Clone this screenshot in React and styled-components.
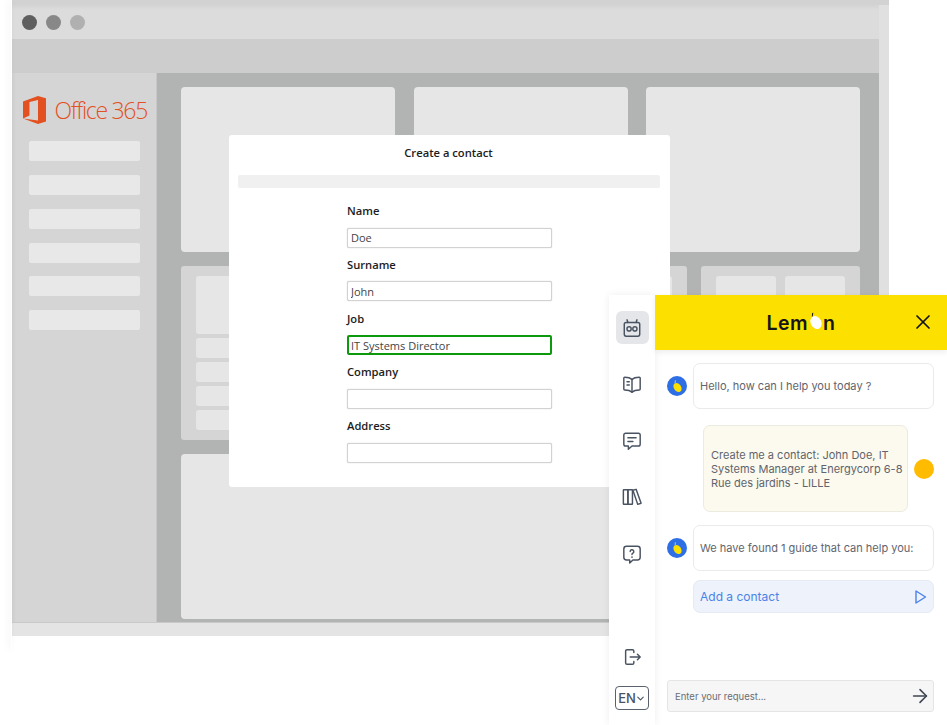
import React from "react";
import styled, { createGlobalStyle } from "styled-components";
import { ArrowRight, ChevronDown, X } from "lucide-react";

const GlobalStyle = createGlobalStyle`
  html, body {
    margin: 0;
    padding: 0;
    background: #fff;
    font-family: "Open Sans", "Liberation Sans", sans-serif;
  }
`;

const Page = styled.div`
  position: relative;
  width: 947px;
  height: 725px;
  overflow: hidden;
  background: #fff;
`;

const Browser = styled.div`
  position: relative;
  margin-left: 12px;
  width: 877px;

  &::before {
    content: "";
    position: absolute;
    left: -1px;
    top: 0;
    bottom: -14px;
    width: 1px;
    box-shadow: -2px 0 6px rgba(0, 0, 0, 0.14);
  }
`;

const TopEdge = styled.div`
  height: 5px;
  background: #d2d2d2;
`;

const Frame = styled.div`
  border-right: 10px solid #e0e0e0;
`;

const TitleBar = styled.div`
  height: 34px;
  display: flex;
  align-items: center;
  gap: 9px;
  padding-left: 10px;
  background: #dcdcdc;
  box-shadow: inset 0 5px 5px -4px rgba(0, 0, 0, 0.06);
`;

const Dot = styled.span`
  width: 15px;
  height: 15px;
  border-radius: 50%;
  background: ${(p) => p.$color};
`;

const ToolBar = styled.div`
  height: 34px;
  background: #cdcdcd;
`;

const Body = styled.div`
  display: flex;
  height: 549px;
`;

const Side = styled.aside`
  width: 145px;
  flex: none;
  padding: 23px 16px 0 17px;
  box-sizing: border-box;
  background: #d5d5d5;
  border-right: 1px solid #c8c8c8;
  box-shadow: inset 5px 0 5px -5px rgba(0, 0, 0, 0.05);
`;

const Logo = styled.div`
  display: flex;
  align-items: center;
  gap: 8.5px;
  height: 28px;
  margin: 0 -7px 17px -6px;
  color: #e2511f;
  font-size: 23px;
  font-weight: 300;
  letter-spacing: -1.3px;
  white-space: nowrap;
`;

const SideList = styled.div`
  display: flex;
  flex-direction: column;
  gap: 13.85px;
`;

const SideItem = styled.div`
  height: 20px;
  border-radius: 2px;
  background: #e8e8e8;
`;

const Main = styled.main`
  flex: 1;
  display: flex;
  flex-direction: column;
  gap: 14px;
  padding: 14px 19px 3px 24px;
  background: #b2b4b3;
`;

const TopRow = styled.div`
  display: grid;
  grid-template-columns: 214px 214px 214px;
  justify-content: space-between;
  height: 165px;
`;

const Card = styled.div`
  border-radius: 4px;
  background: #e6e6e6;
`;

const MidRow = styled.div`
  display: flex;
  gap: 14px;
  height: 174px;
`;

const Panel = styled.div`
  display: flex;
  flex-direction: column;
  gap: 4px;
  box-sizing: border-box;
  width: ${(p) => p.$width}px;
  padding: 10px 15px;
  border-radius: 3px;
  background: #d5d5d5;
`;

const PanelTiles = styled.div`
  display: flex;
  gap: 9px;
`;

const Tile = styled.div`
  flex: ${(p) => (p.$fixed ? "0 0 60px" : "none")};
  height: ${(p) => p.$height}px;
  border-radius: 3px;
  background: #e6e6e6;
`;

const BottomCard = styled(Card)`
  flex: 1;
`;

const Footer = styled.div`
  height: 14px;
  background: #e4e4e4;
  border-top: 1px solid #c9c9c9;
  box-sizing: border-box;
`;

const Modal = styled.section`
  position: absolute;
  left: 229px;
  top: 135px;
  width: 441px;
  height: 352px;
  box-sizing: border-box;
  padding-top: 10px;
  border-radius: 3px;
  background: #fff;
`;

const ModalTitle = styled.h2`
  margin: 0 0 15px;
  height: 15px;
  text-align: center;
  color: #1c1c1c;
  font-size: 11.2px;
  line-height: 15px;
  font-weight: 550;
  transform: translateX(-1px);
`;

const Strip = styled.div`
  height: 13px;
  margin: 0 10px 15px 9px;
  border-radius: 2px;
  background: #f0f0f0;
`;

const Form = styled.div`
  display: flex;
  flex-direction: column;
  gap: 9.25px;
  width: 205px;
  margin-left: 118px;
`;

const FieldGroup = styled.label`
  display: flex;
  flex-direction: column;
  gap: 9.5px;
  height: 44.5px;
  color: #1c1c1c;
  font-size: 11.2px;
  line-height: 15px;
  font-weight: 550;
`;

const Field = styled.input`
  box-sizing: border-box;
  width: 205px;
  height: 20px;
  padding: 0 ${(p) => (p.$active ? "2px" : "3px")};
  border: ${(p) => (p.$active ? "2px solid #0c9a0c" : "1px solid #d2d2d2")};
  border-radius: 2px;
  outline: none;
  background: #fff;
  box-shadow: ${(p) => (p.$active ? "none" : "0 0 1px #b4b4b4")};
  color: #444;
  font-family: "Open Sans", "Liberation Sans", sans-serif;
  font-size: 11px;
`;

const Widget = styled.section`
  position: absolute;
  left: 609px;
  top: 295px;
  width: 338px;
  height: 430px;
  display: flex;
  background: #fff;
`;

const Rail = styled.nav`
  width: 46px;
  height: 100%;
  box-sizing: border-box;
  padding: 16px 0 15px;
  display: flex;
  flex-direction: column;
  align-items: center;
  background: #fff;
  box-shadow: 0 0 8px rgba(0, 0, 0, 0.07);
`;

const RailButton = styled.div`
  width: 33px;
  height: 33px;
  display: flex;
  align-items: center;
  justify-content: center;
  flex: none;
  margin-bottom: ${(p) => p.$gap ?? 23.5}px;
  border-radius: 6px;
  background: ${(p) => (p.$active ? "#e4e6ea" : "transparent")};
  color: #4a5361;
`;

const Spacer = styled.div`
  flex: 1;
`;

const Lang = styled.div`
  box-sizing: border-box;
  width: 34px;
  height: 24px;
  display: flex;
  align-items: center;
  justify-content: center;
  border: 1.5px solid #5a626e;
  border-radius: 4px;
  color: #4a5361;
  font-family: Inter, "Liberation Sans", sans-serif;
  font-size: 13px;
  font-weight: 500;

  svg {
    margin-left: -1px;
    flex: none;
  }
`;

const Chat = styled.div`
  flex: 1;
  display: flex;
  flex-direction: column;
  font-family: Inter, "Liberation Sans", sans-serif;
`;

const ChatHeader = styled.header`
  position: relative;
  height: 55px;
  display: flex;
  align-items: center;
  justify-content: center;
  flex: none;
  background: #fbe000;
  box-shadow: 0 2px 6px rgba(0, 0, 0, 0.08);
`;

const Brand = styled.div`
  display: flex;
  align-items: center;
  color: #141414;
  font-size: 19.5px;
  font-weight: 600;
  letter-spacing: 0.45px;
`;

const BrandLemon = styled.svg`
  margin: -3px 1px 0 1px;
`;

const CloseButton = styled.div`
  position: absolute;
  right: 12px;
  top: 15px;
  display: flex;
  color: #141414;
`;

const Messages = styled.div`
  flex: 1;
  display: flex;
  flex-direction: column;
  padding: 13px 13px 0 12px;
`;

const BotRow = styled.div`
  display: flex;
  align-items: center;
  gap: 6px;
  margin-bottom: ${(p) => p.$gap}px;
`;

const Avatar = styled.div`
  width: 20px;
  height: 20px;
  flex: none;
  display: flex;
  border-radius: 50%;
  background: #2f6fe6;
`;

const Bubble = styled.div`
  flex: 1;
  box-sizing: border-box;
  height: 46px;
  display: flex;
  align-items: center;
  padding: 0 6px;
  border: 1px solid #e9eaec;
  border-radius: 7px;
  background: #fff;
  color: #5f646d;
  font-size: 11px;
`;

const UserRow = styled.div`
  display: flex;
  align-items: center;
  gap: 6px;
  margin: 0 0 13px 36px;
`;

const UserBubble = styled.div`
  width: 205px;
  height: 87px;
  box-sizing: border-box;
  display: flex;
  align-items: center;
  padding: 8px 3px 8px 7px;
  border: 1px solid #ecebdf;
  border-radius: 7px;
  background: #fcfaee;
  color: #5f646d;
  font-size: 11px;
  line-height: 14px;
`;

const UserDot = styled.div`
  width: 20px;
  height: 20px;
  flex: none;
  border-radius: 50%;
  background: #ffbb00;
`;

const GuideLink = styled.div`
  height: 33px;
  box-sizing: border-box;
  display: flex;
  align-items: center;
  justify-content: space-between;
  margin-left: 26px;
  padding: 0 6px 0 6px;
  border: 1px solid #e5eaf4;
  border-radius: 7px;
  background: #edf2fb;
  color: #4a82e8;
  font-size: 12px;
`;

const InputBar = styled.div`
  height: 32px;
  box-sizing: border-box;
  display: flex;
  align-items: center;
  justify-content: space-between;
  flex: none;
  margin: 0 13px 13px 12px;
  padding: 0 2px 0 7px;
  border: 1px solid #e5e5e5;
  border-radius: 3px;
  background: #f6f6f6;
  color: #6a6e75;
  font-size: 9.5px;
`;

const SendIcon = styled(ArrowRight)`
  color: #3f4652;
`;

const OfficeMark = () => (
  <svg width="23" height="28" viewBox="0 0 23 28">
    <path
      fill="#e2511f"
      d="M0 22.500V5.600L15 0l8 2.300v23.300L15 28 0 22.500l15 2V4L6.500 6v13.500Z"
    />
  </svg>
);

const IconBase = ({ children }) => (
  <svg
    width="20"
    height="20"
    viewBox="0 0 22 22"
    fill="none"
    stroke="currentColor"
    strokeWidth="1.6"
    strokeLinecap="round"
    strokeLinejoin="round"
  >
    {children}
  </svg>
);

const RobotIcon = () => (
  <IconBase>
    <path d="M6.500 5 5.500 2M15.500 5l1-3" />
    <rect x="2.500" y="5" width="17" height="15" rx="2" />
    <circle cx="7.800" cy="12" r="2.300" />
    <circle cx="14.200" cy="12" r="2.300" />
  </IconBase>
);

const BookIcon = () => (
  <IconBase>
    <path d="M11 6C9 4 6 3.500 3 3.500c-.6 0-1 .4-1 1v12c0 .6.400 1 1 1 3 0 6 .5 8 2.500 2-2 5-2.500 8-2.500.6 0 1-.4 1-1v-12c0-.6-.4-1-1-1-3 0-6 .5-8 2.500Z" />
    <path d="M11 6v14M5.500 8.500h2.500M5.500 12h2.500" />
  </IconBase>
);

const MessageIcon = () => (
  <IconBase>
    <path d="M4 2.500h14a2 2 0 0 1 2 2v10a2 2 0 0 1-2 2h-7l-4 3.500v-3.500H4a2 2 0 0 1-2-2v-10a2 2 0 0 1 2-2Z" />
    <path d="M6.500 7.500h9M6.500 11.500h5.500" />
  </IconBase>
);

const LibraryIcon = () => (
  <IconBase>
    <rect x="1.500" y="3" width="5" height="16" rx="0.5" />
    <rect x="6.500" y="3" width="5" height="16" rx="0.5" />
    <path d="m12 3.500 3.500-.9 5.500 15.300-3.700 1.200Z" />
  </IconBase>
);

const HelpIcon = () => (
  <IconBase>
    <path d="M5 2.500h12a3 3 0 0 1 3 3v9a3 3 0 0 1-3 3h-5L8.500 21v-3.500H5a3 3 0 0 1-3-3v-9a3 3 0 0 1 3-3Z" />
    <path d="M9 8.300a2 2 0 1 1 3 1.700c-.7.400-1 .8-1 1.500" />
    <path d="M11 14.300v.1" strokeWidth="1.900" />
  </IconBase>
);

const ExitIcon = () => (
  <IconBase>
    <path d="M13 6V4.500A1.500 1.500 0 0 0 11.500 3h-6A1.500 1.500 0 0 0 4 4.500v13A1.500 1.500 0 0 0 5.500 19h6a1.500 1.500 0 0 0 1.500-1.500V16" />
    <path d="M9 11h11M17 8l3 3-3 3" />
  </IconBase>
);

const PlayIcon = () => (
  <svg width="14" height="16" viewBox="0 0 14 16" fill="none" stroke="#4a82e8" strokeWidth="1.400" strokeLinejoin="round">
    <path d="M3 2v12l9.500-6Z" />
  </svg>
);

const LemonO = () => (
  <BrandLemon width="13" height="20" viewBox="0 0 13 20">
    <ellipse cx="7" cy="11.500" rx="5.300" ry="6.800" fill="#fff" transform="rotate(-28 7 11.500)" />
    <path fill="#141414" d="M3.200 2 4.300 1.800 3.800 5.200 2.800 5.500Z" />
  </BrandLemon>
);

const LemonBadge = () => (
  <svg width="20" height="20" viewBox="0 0 20 20">
    <ellipse cx="10.500" cy="11.500" rx="3.600" ry="5" fill="#fbe000" transform="rotate(-35 10.500 11.500)" />
    <path fill="#9fc0f5" d="M7.800 4.600 9 4.300l-.3 2.700-1.100.4Z" />
  </svg>
);

const sideItems = [0, 1, 2, 3, 4, 5];
const fields = [
  { label: "Name", value: "Doe" },
  { label: "Surname", value: "John" },
  { label: "Job", value: "IT Systems Director", active: true },
  { label: "Company", value: "" },
  { label: "Address", value: "" },
];

export default function App() {
  return (
    <Page>
      <GlobalStyle />
      <Browser>
        <TopEdge />
        <Frame>
          <TitleBar>
            <Dot $color="#5f5f5f" />
            <Dot $color="#888888" />
            <Dot $color="#b0b0b0" />
          </TitleBar>
          <ToolBar />
          <Body>
            <Side>
              <Logo>
                <OfficeMark />
                Office 365
              </Logo>
              <SideList>
                {sideItems.map((i) => (
                  <SideItem key={i} />
                ))}
              </SideList>
            </Side>
            <Main>
              <TopRow>
                <Card />
                <Card />
                <Card />
              </TopRow>
              <MidRow>
                <Panel $width={506}>
                  <Tile $height={58} />
                  <Tile $height={20} />
                  <Tile $height={20} />
                  <Tile $height={20} />
                  <Tile $height={20} />
                </Panel>
                <Panel $width={159}>
                  <PanelTiles>
                    <Tile $fixed $height={58} />
                    <Tile $fixed $height={58} />
                  </PanelTiles>
                </Panel>
              </MidRow>
              <BottomCard />
            </Main>
          </Body>
          <Footer />
        </Frame>
      </Browser>

      <Modal>
        <ModalTitle>Create a contact</ModalTitle>
        <Strip />
        <Form>
          {fields.map((f) => (
            <FieldGroup key={f.label}>
              {f.label}
              <Field readOnly value={f.value} $active={f.active} />
            </FieldGroup>
          ))}
        </Form>
      </Modal>

      <Widget>
        <Rail>
          <RailButton $active><RobotIcon /></RailButton>
          <RailButton><BookIcon /></RailButton>
          <RailButton><MessageIcon /></RailButton>
          <RailButton><LibraryIcon /></RailButton>
          <RailButton><HelpIcon /></RailButton>
          <Spacer />
          <RailButton $gap={13}><ExitIcon /></RailButton>
          <Lang>
            EN
            <ChevronDown size={11} strokeWidth={2.4} />
          </Lang>
        </Rail>
        <Chat>
          <ChatHeader>
            <Brand>
              Lem
              <LemonO />
              n
            </Brand>
            <CloseButton>
              <X size={24} strokeWidth={1.7} />
            </CloseButton>
          </ChatHeader>
          <Messages>
            <BotRow $gap={16}>
              <Avatar><LemonBadge /></Avatar>
              <Bubble>Hello, how can I help you today ?</Bubble>
            </BotRow>
            <UserRow>
              <UserBubble>Create me a contact: John Doe, IT Systems Manager at Energycorp 6-8 Rue des jardins - LILLE</UserBubble>
              <UserDot />
            </UserRow>
            <BotRow $gap={9}>
              <Avatar><LemonBadge /></Avatar>
              <Bubble>We have found 1 guide that can help you:</Bubble>
            </BotRow>
            <GuideLink>
              Add a contact
              <PlayIcon />
            </GuideLink>
          </Messages>
          <InputBar>
            Enter your request...
            <SendIcon size={22} strokeWidth={1.7} />
          </InputBar>
        </Chat>
      </Widget>
    </Page>
  );
}
